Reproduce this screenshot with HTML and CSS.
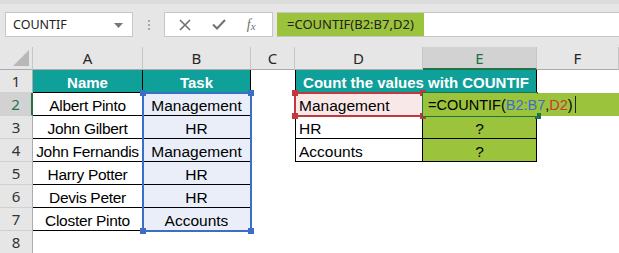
FILE: index.html
```html
<!DOCTYPE html>
<html lang="en">
<head>
  <meta charset="UTF-8">
  <title>COUNTIF example</title>
  <link rel="stylesheet" href="styles.css">
</head>
<body>
  <div class="topbar">
    <div class="namebox">
      <span>COUNTIF</span>
      <svg class="drop" width="9" height="5" viewBox="0 0 9 5"><polygon points="0,0 9,0 4.5,5" fill="#777"/></svg>
    </div>
    <div class="grip"><i></i><i></i><i></i></div>
    <div class="fbtns">
      <svg width="12" height="12" viewBox="0 0 12 12"><path d="M1 1 L11 11 M11 1 L1 11" stroke="#707070" stroke-width="1.6" fill="none"/></svg>
      <svg width="14" height="11" viewBox="0 0 14 11"><path d="M1 5.5 L5 9.5 L13 1" stroke="#707070" stroke-width="2" fill="none"/></svg>
      <span class="fx">f<sub>x</sub></span>
    </div>
    <div class="fbar"><span class="fbar-text">=COUNTIF(B2:B7,D2)</span></div>
  </div>

  <div class="sheet">
    <!-- column headers -->
    <div class="corner"><svg width="16" height="16" viewBox="0 0 16 16"><polygon points="16,0 16,16 0,16" fill="#b8b8b8"/></svg></div>
    <div class="ch">A</div>
    <div class="ch">B</div>
    <div class="ch">C</div>
    <div class="ch">D</div>
    <div class="ch ch-on">E</div>
    <div class="ch">F</div>

    <!-- row 1 -->
    <div class="rh">1</div>
    <div class="c head b">Name</div>
    <div class="c head b">Task</div>
    <div class="c"></div>
    <div class="c head b bl span2">Count the values with COUNTIF</div>
    <div class="c"></div>

    <!-- row 2 -->
    <div class="rh rh-on">2</div>
    <div class="c b name">Albert Pinto</div>
    <div class="c b task">Management</div>
    <div class="c"></div>
    <div class="c b bl left pink">Management</div>
    <div class="c green edit">=COUNTIF(<span class="ref-b">B2:B7</span>,<span class="ref-d">D2</span>)<i class="caret"></i></div>
    <div class="c green"></div>

    <!-- row 3 -->
    <div class="rh">3</div>
    <div class="c b name">John Gilbert</div>
    <div class="c b task">HR</div>
    <div class="c"></div>
    <div class="c b bl left">HR</div>
    <div class="c b green">?</div>
    <div class="c"></div>

    <!-- row 4 -->
    <div class="rh">4</div>
    <div class="c b name">John Fernandis</div>
    <div class="c b task">Management</div>
    <div class="c"></div>
    <div class="c b bl left">Accounts</div>
    <div class="c b green">?</div>
    <div class="c"></div>

    <!-- row 5 -->
    <div class="rh">5</div>
    <div class="c b name">Harry Potter</div>
    <div class="c b task">HR</div>
    <div class="c"></div><div class="c"></div><div class="c"></div><div class="c"></div>

    <!-- row 6 -->
    <div class="rh">6</div>
    <div class="c b name">Devis Peter</div>
    <div class="c b task">HR</div>
    <div class="c"></div><div class="c"></div><div class="c"></div><div class="c"></div>

    <!-- row 7 -->
    <div class="rh">7</div>
    <div class="c b name">Closter Pinto</div>
    <div class="c b task">Accounts</div>
    <div class="c"></div><div class="c"></div><div class="c"></div><div class="c"></div>

    <!-- row 8 -->
    <div class="rh">8</div>
    <div class="c"></div><div class="c"></div><div class="c"></div><div class="c"></div><div class="c"></div><div class="c"></div>

    <!-- range highlights drawn over the cells -->
    <div class="sel sel-blue"><i class="h tl"></i><i class="h tr"></i><i class="h bl2"></i><i class="h br"></i></div>
    <div class="sel sel-red"><i class="h tl"></i><i class="h tr"></i><i class="h bl2"></i><i class="h br"></i></div>
    <div class="sel sel-active"><i class="h br"></i></div>
  </div>
</body>
</html>
```

FILE: styles.css
```css
body { margin: 0; background: #fff; font-family: "Liberation Sans", Arial, sans-serif; overflow: hidden; }

/* formula bar area */
.topbar { height: 47px; box-sizing: border-box; background: #e6e6e6; border-top: 4px solid #dcdcdc; padding: 8px 0 0 5px; display: flex; align-items: flex-start; }
.namebox { width: 128px; height: 25px; box-sizing: border-box; background: #fff; border: 1px solid #c6c6c6; display: flex; align-items: center; justify-content: space-between; padding: 0 9px 0 7px; font-family: "Noto Sans", sans-serif; font-size: 12.5px; color: #222; }
.drop { margin-top: 1px; }
.grip { width: 31px; height: 25px; display: flex; flex-direction: column; align-items: center; justify-content: center; gap: 2px; }
.grip i { width: 2px; height: 2px; background: #a8a8a8; }
.fbtns { width: 109px; height: 25px; box-sizing: border-box; background: #fff; border: 1px solid #c6c6c6; display: flex; align-items: center; justify-content: space-around; padding: 0 6px 0 4px; }
.fx { font-family: "Liberation Serif", serif; font-style: italic; font-size: 14px; color: #707070; line-height: 1; }
.fx sub { font-size: 11px; vertical-align: -1px; }
.fbar { flex: 1; height: 25px; box-sizing: border-box; margin-left: 4px; background: #fff; border: 1px solid #c6c6c6; border-left: none; border-right: none; }
.fbar-text { display: block; width: 147px; height: 100%; box-sizing: border-box; background: #9bc33c; padding-left: 10px; font-family: "Noto Sans", sans-serif; font-size: 13px; line-height: 23px; color: #222; }

/* sheet grid */
.sheet { position: relative; display: grid; grid-template-columns: 33px 110px 108px 44px 128px 114px 82px; grid-template-rows: repeat(9, 23px); }
.corner { background: #e6e6e6; border-right: 1px solid #c6c6c6; border-bottom: 1px solid #ababab; box-sizing: border-box; display: flex; align-items: flex-end; justify-content: flex-end; padding: 0 3px 3px 0; }
.ch { background: #e6e6e6; box-sizing: border-box; border-right: 1px solid #c6c6c6; border-bottom: 1px solid #ababab; text-align: center; font-family: "Noto Sans", sans-serif; font-size: 15px; line-height: 23px; color: #262626; }
.ch-on { background: #d2d2d2; color: #217346; border-bottom: 2px solid #217346; }
.rh { background: #e6e6e6; box-sizing: border-box; border-right: 1px solid #ababab; border-bottom: 1px solid #d0d0d0; text-align: center; font-family: "Noto Sans", sans-serif; font-size: 15px; line-height: 23px; color: #333; }
.rh-on { background: #d2d2d2; color: #217346; border-right: 2px solid #217346; }

.c { box-sizing: border-box; font-size: 15.5px; line-height: 23px; padding-top: 1px; text-align: center; color: #000; white-space: nowrap; }
.name { letter-spacing: -0.3px; }
.b { border-right: 1px solid #000; border-bottom: 1px solid #000; }
.bl { border-left: 1px solid #000; }
.left { text-align: left; padding-left: 3px; }
.span2 { grid-column: span 2; }
.head { background: #0fa09a; color: #fff; font-weight: bold; font-size: 15px; }
.task { background: #e9eef8; }
.pink { background: #f9e8e8; }
.green { background: #9bc33c; }
.edit { text-align: left; padding-left: 5px; font-size: 14.5px; overflow: visible; position: relative; z-index: 3; }
.ref-b { color: #3b6fc6; }
.ref-d { color: #c8373d; }
.caret { display: inline-block; width: 1px; height: 17px; background: #222; vertical-align: -3px; margin-left: 2px; }

/* range outlines */
.sel { position: absolute; inset: -1px; border: 2px solid; pointer-events: none; z-index: 2; }
.sel-blue { grid-column: 3 / 4; grid-row: 3 / 9; border-color: #3b6fc6; }
.sel-red { grid-column: 5 / 6; grid-row: 3 / 4; border-color: #c0393f; }
.sel-active { grid-column: 6 / 7; grid-row: 3 / 4; border-color: #217346; border-right: none; }
.h { position: absolute; width: 6px; height: 6px; }
.sel-blue .h { background: #3b6fc6; }
.sel-red .h { background: #c0393f; }
.sel-active .h { background: #217346; }
.tl { left: -4px; top: -4px; }
.tr { right: -4px; top: -4px; }
.bl2 { left: -4px; bottom: -4px; }
.br { right: -4px; bottom: -4px; }
.sel-active .br { right: -3px; }
```
